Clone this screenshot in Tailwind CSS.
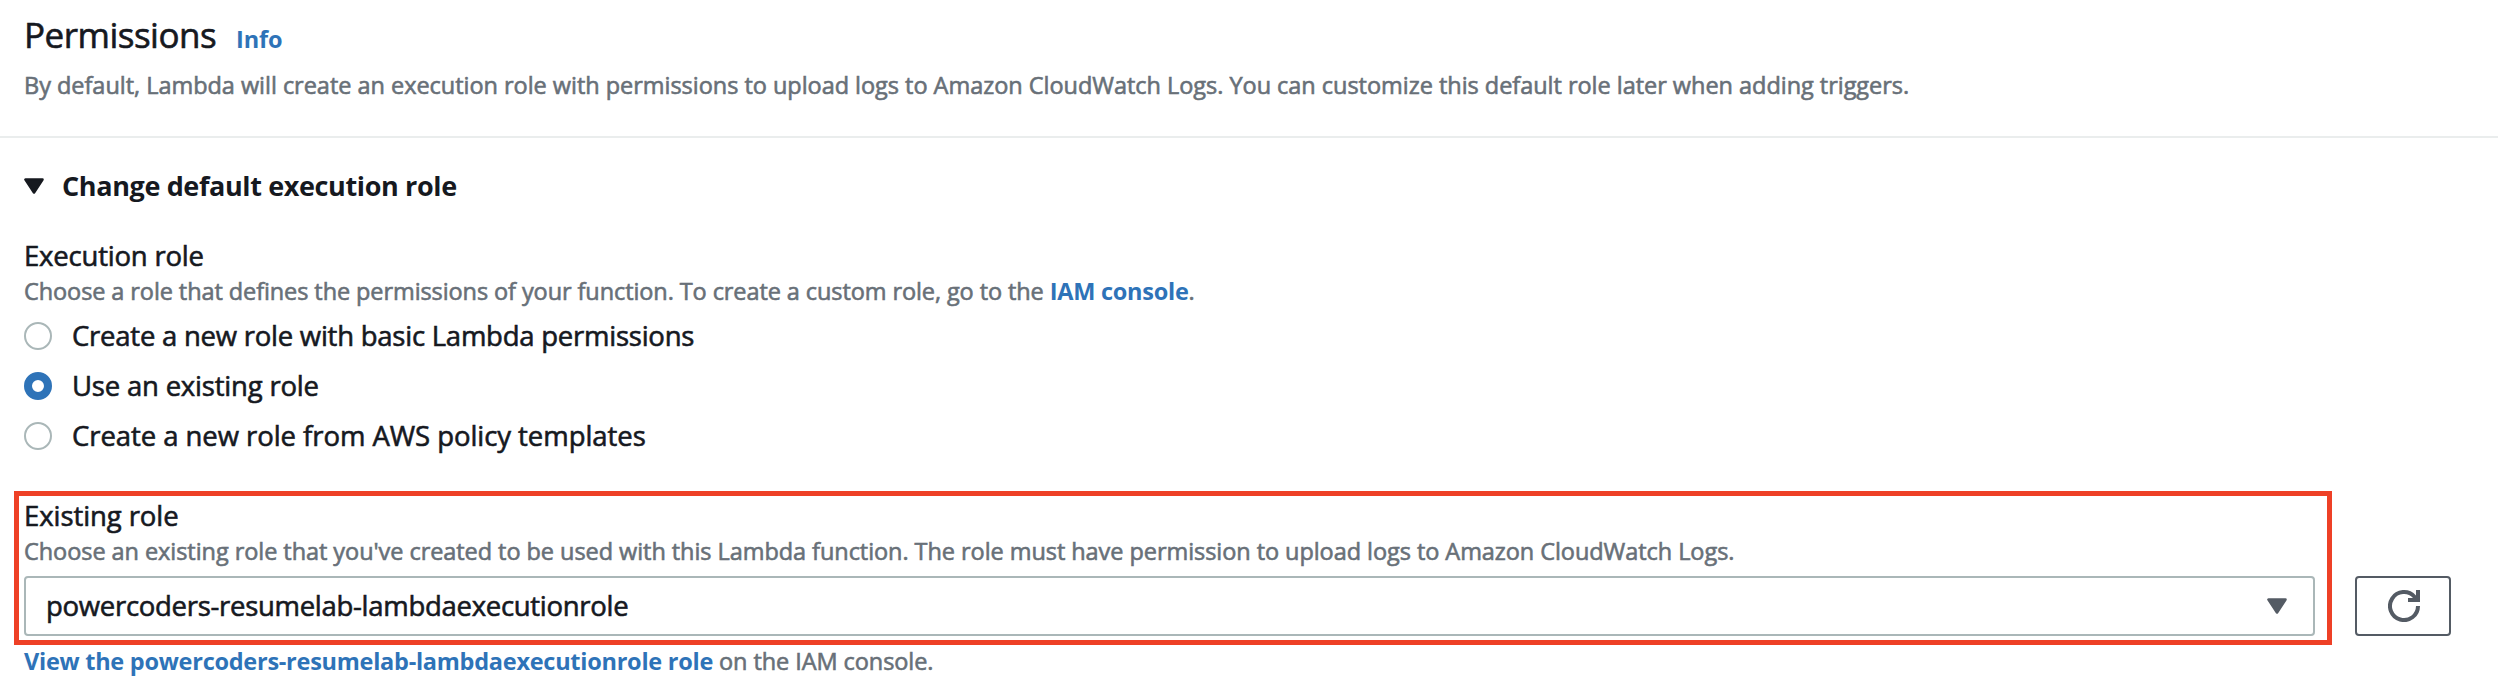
<!DOCTYPE html>
<html lang="en">
<head>
<meta charset="utf-8">
<title>Permissions</title>
<script src="https://cdn.jsdelivr.net/npm/@tailwindcss/browser@4"></script>
</head>
<body class="bg-white font-['Open_Sans','Noto_Sans',sans-serif] text-[#16191f] whitespace-nowrap overflow-hidden">
<header class="h-[138px] border-b-2 border-[#eaeded] pl-6 pt-[13px]">
  <div class="flex items-baseline">
    <h2 class="text-[35px] leading-[44px] tracking-[-0.5px] w-[212px] [-webkit-text-stroke:0.6px]">Permissions</h2>
    <a class="text-[23.5px] font-bold text-[#2e73b8] tracking-[-0.1px]">Info</a>
  </div>
  <p class="mt-3 text-[23.5px] leading-8 text-[#687078] tracking-[-0.03px] [-webkit-text-stroke:0.6px]">By default, Lambda will create an execution role with permissions to upload logs to Amazon CloudWatch Logs. You can customize this default role later when adding triggers.</p>
</header>
<main class="relative pl-6 pt-7">
  <div class="flex items-center h-10">
    <svg class="w-5 h-4" viewBox="0 0 20 16"><path d="M1.5 1.5h17L10 14.5z" fill="#16191f" stroke="#16191f" stroke-width="2.6" stroke-linejoin="round"/></svg>
    <h3 class="ml-[18px] text-[27px] leading-10 font-bold tracking-[-0.37px]">Change default execution role</h3>
  </div>
  <section class="mt-8">
    <div class="text-[27.5px] leading-9 tracking-[-0.2px] [-webkit-text-stroke:0.6px]">Execution role</div>
    <div class="mt-px text-[23.5px] leading-8 text-[#687078] tracking-[-0.09px] [-webkit-text-stroke:0.6px]">Choose a role that defines the permissions of your function. To create a custom role, go to the <a class="font-bold text-[#2e73b8] tracking-[-0.25px] [-webkit-text-stroke:0px]">IAM console</a>.</div>
    <div class="mt-1 text-[27.5px] [-webkit-text-stroke:0.6px]">
      <label class="flex items-center gap-5 h-[50px] leading-9 tracking-[-0.24px]"><span class="size-7 rounded-full border-2 border-[#aab7b8]"></span>Create a new role with basic Lambda permissions</label>
      <label class="flex items-center gap-5 h-[50px] leading-9 tracking-[-0.2px]"><span class="size-7 rounded-full border-8 border-[#2e73b8]"></span>Use an existing role</label>
      <label class="flex items-center gap-5 h-[50px] leading-9 tracking-[-0.06px]"><span class="size-7 rounded-full border-2 border-[#aab7b8]"></span>Create a new role from AWS policy templates</label>
    </div>
  </section>
  <section class="mt-[37px]">
    <div class="text-[27.5px] leading-9 tracking-[-0.08px] [-webkit-text-stroke:0.6px]">Existing role</div>
    <div class="mt-px text-[23.5px] leading-8 text-[#687078] tracking-[-0.06px] [-webkit-text-stroke:0.6px]">Choose an existing role that you've created to be used with this Lambda function. The role must have permission to upload logs to Amazon CloudWatch Logs.</div>
    <div class="mt-[9px] flex gap-10">
      <div class="flex items-center justify-between w-[2291px] h-[60px] pl-5 pr-[26px] border-2 border-[#aab7b8] rounded-[4px]">
        <span class="text-[27.5px] leading-9 tracking-[-0.29px] [-webkit-text-stroke:0.6px]">powercoders-resumelab-lambdaexecutionrole</span>
        <svg class="w-5 h-4" viewBox="0 0 20 16"><path d="M1.5 1.5h17L10 14.5z" fill="#545b64" stroke="#545b64" stroke-width="2.6" stroke-linejoin="round"/></svg>
      </div>
      <button class="flex items-center justify-center w-24 h-[60px] border-2 border-[#545b64] rounded-[4px]">
        <svg class="size-8 ml-[2px]" viewBox="0 0 32 32" fill="none" stroke="#545b64" stroke-width="4"><path d="M30 16A14 14 0 1 1 26.500 6.800L29 10"/><path d="M30 0v10H20"/></svg>
      </button>
    </div>
    <div class="mt-[9px] text-[23.5px] leading-8 text-[#687078] tracking-[-0.08px] [-webkit-text-stroke:0.6px]"><a class="font-bold text-[#2e73b8] tracking-[-0.26px] [-webkit-text-stroke:0px]">View the powercoders-resumelab-lambdaexecutionrole role</a> on the IAM console.</div>
  </section>
  <div class="absolute left-[14px] top-[353px] w-[2318px] h-[154px] border-[5px] border-[#ee4026]"></div>
</main>
</body>
</html>
